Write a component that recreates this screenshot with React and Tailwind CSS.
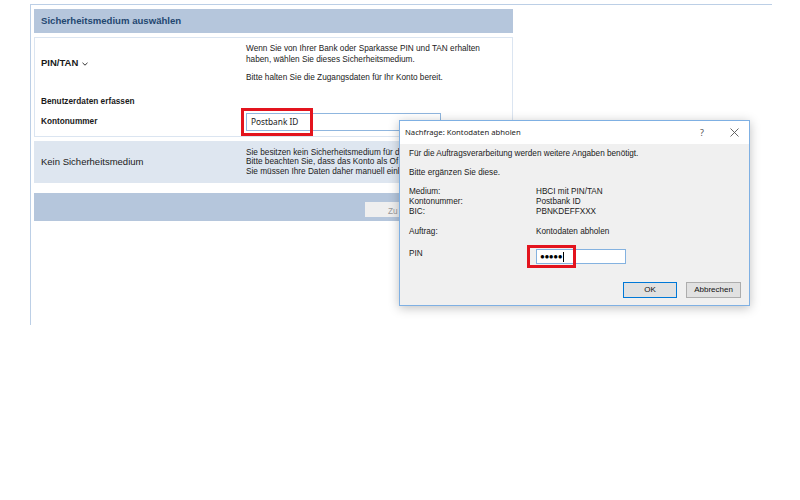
import React from "react";

const arial = { fontFamily: '"Liberation Sans", Arial, sans-serif' };

const Chevron = () => (
    <svg width="6" height="4" viewBox="0 0 6 4" className="ml-[4px] mt-[1px]">
        <path d="M0.5 0.8 L3 3.2 L5.5 0.8" fill="none" stroke="#333" strokeWidth="1" />
    </svg>
);

const Dialog = () => (
    <div className="absolute left-[399px] top-[120px] w-[351px] h-[186px] border border-[#7fb0e3] bg-[#f0f0f0] shadow-[0_2px_10px_rgba(0,0,0,0.25)] flex flex-col">
        {/* title bar */}
        <div className="h-[23px] bg-white flex items-center pl-[5px] pr-[10px] text-[7.7px] text-[#222] font-['Noto_Sans',sans-serif]">
            <span>Nachfrage: Kontodaten abholen</span>
            <span className="ml-auto mr-[26px] text-[9px] text-[#555]">?</span>
            <svg width="9" height="9" viewBox="0 0 9 9">
                <path d="M0.5 0.5 L8.5 8.5 M8.5 0.5 L0.5 8.5" stroke="#555" strokeWidth="0.9" />
            </svg>
        </div>

        {/* body */}
        <div className="pl-[9px] pr-[8px] pt-[5px] text-[8.2px] leading-[10px] text-[#1a1a1a]" style={arial}>
            <div>Für die Auftragsverarbeitung werden weitere Angaben benötigt.</div>
            <div className="mt-[9px]">Bitte ergänzen Sie diese.</div>

            <div className="mt-[9px] grid grid-cols-[127px_1fr]">
                <div>Medium:</div>
                <div>HBCI mit PIN/TAN</div>
                <div>Kontonummer:</div>
                <div>Postbank ID</div>
                <div>BIC:</div>
                <div>PBNKDEFFXXX</div>
            </div>

            <div className="mt-[10px] grid grid-cols-[127px_1fr]">
                <div>Auftrag:</div>
                <div>Kontodaten abholen</div>
            </div>

            <div className="mt-[12px] grid grid-cols-[127px_1fr] items-start">
                <div>PIN</div>
                <div className="relative w-[90px] h-[15px] bg-white border border-[#84b2e0] flex items-center pl-[3px]">
                    <span className="text-[8px] tracking-[-0.4px] text-black leading-none">●●●●●</span>
                    <span className="ml-[1px] w-px h-[10px] bg-black" />
                    <div className="absolute left-[-10px] top-[-5px] w-[49px] h-[23px] border-[3px] border-[#e3141e]" />
                </div>
            </div>

            <div className="mt-[18px] flex justify-end gap-[9px]">
                <button className="w-[54px] h-[16px] bg-[#e1e1e1] border border-[#0078d7] text-[8px] leading-none text-[#111]">OK</button>
                <button className="w-[55px] h-[16px] bg-[#e1e1e1] border border-[#adadad] text-[8px] leading-none text-[#111]">Abbrechen</button>
            </div>
        </div>
    </div>
);

export default function App() {
    return (
        <div className="relative w-[800px] h-[500px] bg-white overflow-hidden" style={arial}>
            <div className="ml-[30px] mt-[4px] w-[742px] h-[321px] border-l border-t border-[#bccfe6] pl-[3px] pt-[4px]">
                <div className="w-[479px]">
                    {/* Header */}
                    <div className="h-[24px] bg-[#b5c6dc] flex items-center pl-[7px] text-[9.6px] font-bold text-[#234670]">
                        Sicherheitsmedium auswählen
                    </div>

                    {/* PIN/TAN box */}
                    <div className="mt-[4px] h-[100px] border border-[#dbe5f1] text-[#1a1a1a]">
                        <div className="h-[58px] grid grid-cols-[211px_1fr]">
                            <div className="pl-[6px] pt-[19px] leading-[12px] flex items-center h-fit text-[9.5px] font-bold">
                                PIN/TAN <Chevron />
                            </div>
                            <div className="pt-[5px] text-[8.25px] leading-[11px] text-[#222]">
                                <div>Wenn Sie von Ihrer Bank oder Sparkasse PIN und TAN erhalten</div>
                                <div>haben, wählen Sie dieses Sicherheitsmedium.</div>
                                <div className="mt-[7px]">Bitte halten Sie die Zugangsdaten für Ihr Konto bereit.</div>
                            </div>
                        </div>
                        <div className="pl-[6px] leading-[12px] text-[8.25px] font-bold">Benutzerdaten erfassen</div>
                        <div className="mt-[5px] grid grid-cols-[211px_1fr] items-center">
                            <div className="pl-[6px] text-[8.25px] font-bold">Kontonummer</div>
                            <div className="relative w-[195px] h-[18px] border border-[#8fb6df] bg-white flex items-center pl-[4px] text-[8.3px] text-[#222] font-['Noto_Sans',sans-serif]">
                                Postbank ID
                                <div className="absolute left-[-6px] top-[-6px] w-[72px] h-[28px] border-[3px] border-[#e3141e]" />
                            </div>
                        </div>
                    </div>

                    {/* Kein Sicherheitsmedium */}
                    <div className="mt-[4px] h-[42px] bg-[#dee6f0] grid grid-cols-[212px_1fr] items-center text-[#1a1a1a]">
                        <div className="pl-[7px] text-[9.5px]">Kein Sicherheitsmedium</div>
                        <div className="w-[153px] overflow-hidden text-[8.25px] leading-[9.5px] whitespace-nowrap text-[#222]">
                            <div>Sie besitzen kein Sicherheitsmedium für d</div>
                            <div>Bitte beachten Sie, dass das Konto als Of</div>
                            <div>Sie müssen Ihre Daten daher manuell einl</div>
                        </div>
                    </div>

                    {/* Button bar */}
                    <div className="mt-[10px] h-[28px] bg-[#b5c6dc] flex items-center">
                        <div className="ml-[331px] w-[34px] h-[20px] overflow-hidden">
                            <button className="w-[74px] h-[20px] bg-[#efefef] text-[8.25px] text-[#9a9a9a] text-left pl-[23px]">
                                Zu
                            </button>
                        </div>
                    </div>
                </div>
            </div>

            <Dialog />
        </div>
    );
}
